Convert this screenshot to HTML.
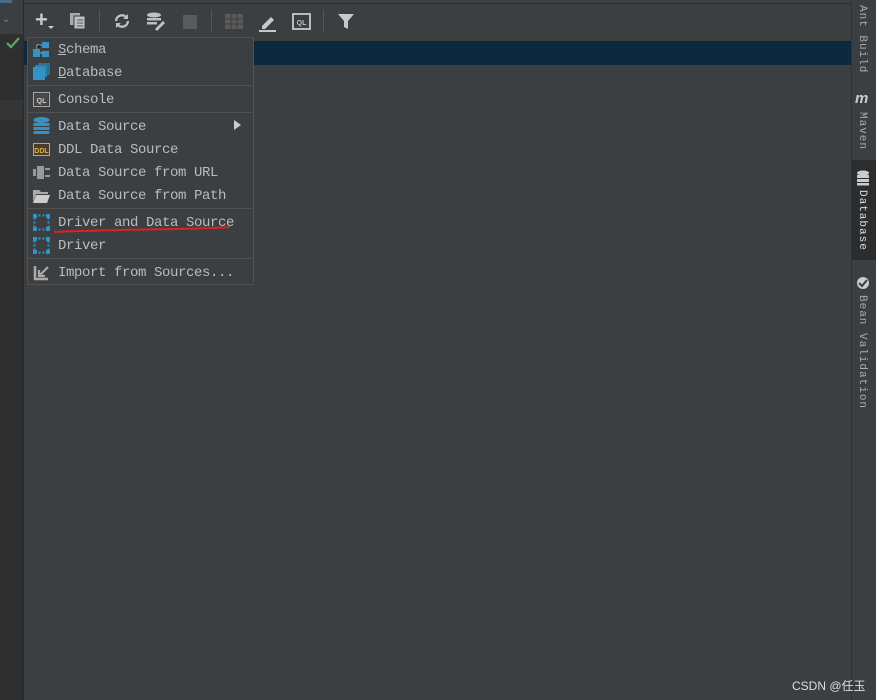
<!DOCTYPE html><html><head><style>
body{margin:0;width:876px;height:700px;background:#3c3f41;position:relative;overflow:hidden;font-family:"Liberation Mono",monospace;}
.a{position:absolute}
.it{position:absolute;left:58px;font-size:14px;color:#bbbbbb;line-height:16px;letter-spacing:-0.4px}
.sep{position:absolute;left:28px;width:224px;height:1px;background:#515151}
.ic{position:absolute;left:33px;width:17px;height:17px}
.vt{position:absolute;writing-mode:vertical-rl;font-size:11px;color:#aaa;letter-spacing:1px}
</style></head><body>
<div class="a" style="left:0;top:0;width:23px;height:700px;background:#2f2f2f"></div>
<div class="a" style="left:0;top:0;width:23px;height:34px;background:#3c3f41"></div>
<div class="a" style="left:0;top:0;width:12px;height:3px;background:#4a6a8a"></div>
<div class="a" style="left:0;top:100px;width:23px;height:20px;background:#353535"></div>
<div class="a" style="left:23px;top:0;width:1px;height:700px;background:#2a2a2a"></div>
<div class="a" style="left:24px;top:3px;width:827px;height:1px;background:#2f2f2f"></div>
<div class="a" style="left:2px;top:14px;color:#888;font-size:10px">&#8964;</div>
<svg class="a" style="left:6px;top:37px" width="14" height="12"><path d="M1 6l4 4 8-9" stroke="#59a869" stroke-width="2.2" fill="none"/></svg>
<div class="a" style="left:24px;top:41px;width:827px;height:24px;background:#0d293e"></div>
<div class="a" style="left:851px;top:0;width:25px;height:700px;background:#3c3f41;border-left:1px solid #323232"></div>
<div class="a" style="left:852px;top:160px;width:24px;height:100px;background:#2b2d2e"></div>
<div class="vt" style="left:856px;top:5px">Ant Build</div>
<div class="a" style="left:855px;top:90px;color:#ccc;font:italic bold 15px 'Liberation Sans',sans-serif">m</div>
<div class="vt" style="left:856px;top:112px">Maven</div>
<svg class="a" style="left:856px;top:170px" width="14" height="16"><g fill="#ccc"><ellipse cx="7" cy="3" rx="6" ry="2.5"/><rect x="1" y="5" width="12" height="3"/><rect x="1" y="9" width="12" height="3"/><rect x="1" y="13" width="12" height="2.5"/></g></svg>
<div class="vt" style="left:856px;top:190px;color:#ddd">Database</div>
<svg class="a" style="left:856px;top:276px" width="14" height="14"><circle cx="7" cy="7" r="6" fill="#ccc"/><path d="M3 7l3 3 5-6" stroke="#3c3f41" stroke-width="2" fill="none"/></svg>
<div class="vt" style="left:856px;top:295px">Bean Validation</div>
<!-- toolbar -->
<div class="a" style="left:35px;top:9px;color:#c8c8c8;font:bold 22px 'Liberation Sans';line-height:22px">+</div>
<div class="a" style="left:48px;top:26px;width:0;height:0;border:3px solid transparent;border-top:3px solid #ccc"></div>
<svg class="a" style="left:69px;top:12px" width="18" height="18"><rect x="1" y="1" width="10" height="12" fill="#aaa"/><rect x="5" y="4" width="11" height="13" fill="#c0c0c0" stroke="#3c3f41"/><path d="M8 8h6M8 11h6M8 14h6" stroke="#555"/></svg>
<div class="a" style="left:99px;top:10px;width:1px;height:22px;background:#555"></div>
<svg class="a" style="left:113px;top:12px" width="18" height="18"><path d="M3 9a6 6 0 0 1 11-3M15 9a6 6 0 0 1-11 3" stroke="#c0c0c0" stroke-width="2.4" fill="none"/><path d="M15 2v5h-5zM3 16v-5h5z" fill="#c0c0c0"/></svg>
<svg class="a" style="left:146px;top:12px" width="22" height="20"><ellipse cx="8" cy="3" rx="7" ry="2.5" fill="#c0c0c0"/><rect x="1" y="6" width="14" height="2.5" fill="#c0c0c0"/><rect x="1" y="10" width="10" height="2.5" fill="#c0c0c0"/><path d="M10 18l8-8" stroke="#c0c0c0" stroke-width="3"/></svg>
<div class="a" style="left:183px;top:15px;width:14px;height:14px;background:#5a5a5a"></div>
<div class="a" style="left:211px;top:10px;width:1px;height:22px;background:#555"></div>
<svg class="a" style="left:225px;top:14px" width="18" height="15"><rect width="18" height="15" fill="#5a5a5a"/><path d="M0 5h18M0 10h18M6 0v15M12 0v15" stroke="#3c3f41"/></svg>
<svg class="a" style="left:258px;top:12px" width="20" height="20"><path d="M4 14l9-9 3 3-9 9H4z" fill="#c8c8c8"/><rect x="1" y="18" width="17" height="2" fill="#c8c8c8"/></svg>
<svg class="a" style="left:292px;top:13px" width="19" height="17"><rect x="1" y="1" width="17" height="15" fill="none" stroke="#bbb" stroke-width="2"/><text x="9.5" y="12" font-size="7" fill="#bbb" text-anchor="middle" font-family="Liberation Sans" font-weight="bold">QL</text></svg>
<div class="a" style="left:323px;top:10px;width:1px;height:22px;background:#555"></div>
<svg class="a" style="left:337px;top:13px" width="18" height="17"><path d="M1 1h16l-6 7v8l-4-2V8z" fill="#c8c8c8"/></svg>
<!-- menu -->
<div class="a" style="left:27px;top:37px;width:225px;height:246px;background:#3c3f41;border:1px solid #515151"></div>
<svg class="ic" style="top:41px"><rect x="0" y="8" width="7" height="8" fill="#3592c4"/><rect x="9" y="1" width="7" height="6" fill="#3592c4"/><rect x="9" y="10" width="7" height="6" fill="#3592c4"/><path d="M4 8V4h5M7 12h2" stroke="#aaa"/></svg>
<div class="it" style="top:42px"><u>S</u>chema</div>
<svg class="ic" style="top:63px"><rect x="5" y="0" width="12" height="12" fill="#2a6f94"/><rect x="2" y="2" width="12" height="12" fill="#3080ac"/><rect x="0" y="4" width="12" height="13" fill="#3592c4"/></svg>
<div class="it" style="top:65px"><u>D</u>atabase</div>
<div class="sep" style="top:85px"></div>
<svg class="ic" style="top:91px"><rect x="0.5" y="1.5" width="16" height="14" fill="none" stroke="#aaa"/><rect x="2" y="3" width="13" height="11" fill="#4a4a4a"/><text x="8.5" y="12" font-size="7" fill="#ccc" text-anchor="middle" font-family="Liberation Sans" font-weight="bold">QL</text></svg>
<div class="it" style="top:92px">Console</div>
<div class="sep" style="top:112px"></div>
<svg class="ic" style="top:117px"><g fill="#3592c4"><ellipse cx="8.5" cy="3" rx="8" ry="3"/><rect x="0.5" y="6" width="16" height="3"/><rect x="0.5" y="10" width="16" height="3"/><rect x="0.5" y="14" width="16" height="3" rx="1"/></g></svg>
<div class="it" style="top:119px">Data Source</div>
<div class="a" style="left:234px;top:120px;width:0;height:0;border:5px solid transparent;border-left:7px solid #ccc;border-right:0"></div>
<svg class="ic" style="top:141px"><rect x="0" y="2" width="17" height="13" fill="#d9a343"/><rect x="1" y="3" width="15" height="11" fill="#4a3e2a"/><text x="8.5" y="12" font-size="7" fill="#e0b050" text-anchor="middle" font-family="Liberation Sans" font-weight="bold">DDL</text></svg>
<div class="it" style="top:142px">DDL Data Source</div>
<svg class="ic" style="top:164px"><rect x="0" y="5" width="3" height="7" fill="#999"/><rect x="4" y="2" width="7" height="13" fill="#999"/><rect x="12" y="4" width="5" height="2" fill="#999"/><rect x="12" y="11" width="5" height="2" fill="#999"/></svg>
<div class="it" style="top:165px">Data Source from URL</div>
<svg class="ic" style="top:187px"><path d="M0 3h6l2 2h7v2H3L0 15z" fill="#aaa"/><path d="M3 8h14l-3 8H0z" fill="#ccc"/></svg>
<div class="it" style="top:188px">Data Source from Path</div>
<div class="sep" style="top:208px"></div>
<svg class="ic" style="top:214px"><rect x="1.5" y="1.5" width="14" height="14" fill="none" stroke="#3592c4" stroke-width="2" stroke-dasharray="2 2"/><rect x="0" y="0" width="4" height="4" fill="#3592c4"/><rect x="13" y="0" width="4" height="4" fill="#3592c4"/><rect x="0" y="13" width="4" height="4" fill="#3592c4"/><rect x="13" y="13" width="4" height="4" fill="#3592c4"/></svg>
<div class="it" style="top:215px">Driver and Data Source</div>
<svg class="a" style="left:52px;top:224px" width="182" height="10"><path d="M2 8 C60 5 140 6 178 3" stroke="#e02020" stroke-width="2" fill="none"/></svg>
<svg class="ic" style="top:237px"><rect x="1.5" y="1.5" width="14" height="14" fill="none" stroke="#3592c4" stroke-width="2" stroke-dasharray="2 2"/><rect x="0" y="0" width="4" height="4" fill="#3592c4"/><rect x="13" y="0" width="4" height="4" fill="#3592c4"/><rect x="0" y="13" width="4" height="4" fill="#3592c4"/><rect x="13" y="13" width="4" height="4" fill="#3592c4"/></svg>
<div class="it" style="top:238px">Driver</div>
<div class="sep" style="top:258px"></div>
<svg class="ic" style="top:264px"><path d="M2 2v13h13" stroke="#aaa" stroke-width="2.5" fill="none"/><path d="M15 3L6 12M6 6v6h6" stroke="#aaa" stroke-width="2.2" fill="none"/></svg>
<div class="it" style="top:265px">Import from Sources...</div>
<div class="a" style="left:792px;top:677px;color:#ddd;font:12px 'Liberation Sans','Noto Sans CJK SC',sans-serif">CSDN @任玉</div>
</body></html>
